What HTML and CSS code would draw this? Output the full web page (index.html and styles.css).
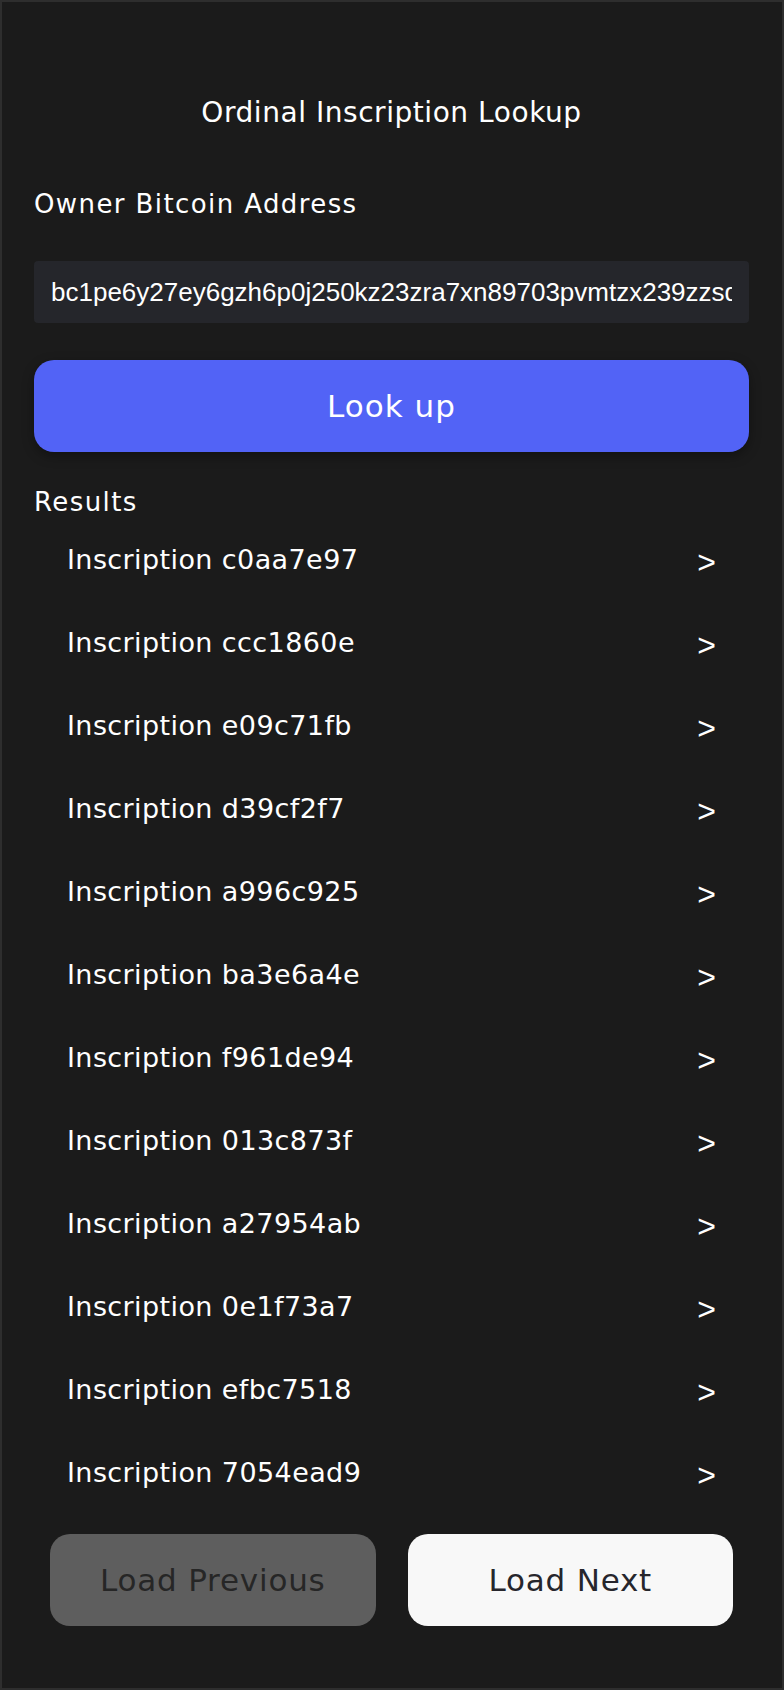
FILE: index.html
```html
<!DOCTYPE html>
<html lang="en">
<head>
<meta charset="utf-8">
<title>Ordinal Inscription Lookup</title>
<link rel="stylesheet" href="styles.css">
</head>
<body>
<div class="app">
  <h1 class="title">Ordinal Inscription Lookup</h1>
  <label class="label" for="addr">Owner Bitcoin Address</label>
  <input id="addr" class="address" type="text" value="bc1pe6y27ey6gzh6p0j250kz23zra7xn89703pvmtzx239zzsq8x5ts3vj0a8gtg3zv">
  <button class="lookup">Look up</button>
  <div class="label results-label">Results</div>
  <ul class="results">
    <li class="item"><span>Inscription c0aa7e97</span><span class="chev">&gt;</span></li>
    <li class="item"><span>Inscription ccc1860e</span><span class="chev">&gt;</span></li>
    <li class="item"><span>Inscription e09c71fb</span><span class="chev">&gt;</span></li>
    <li class="item"><span>Inscription d39cf2f7</span><span class="chev">&gt;</span></li>
    <li class="item"><span>Inscription a996c925</span><span class="chev">&gt;</span></li>
    <li class="item"><span>Inscription ba3e6a4e</span><span class="chev">&gt;</span></li>
    <li class="item"><span>Inscription f961de94</span><span class="chev">&gt;</span></li>
    <li class="item"><span>Inscription 013c873f</span><span class="chev">&gt;</span></li>
    <li class="item"><span>Inscription a27954ab</span><span class="chev">&gt;</span></li>
    <li class="item"><span>Inscription 0e1f73a7</span><span class="chev">&gt;</span></li>
    <li class="item"><span>Inscription efbc7518</span><span class="chev">&gt;</span></li>
    <li class="item"><span>Inscription 7054ead9</span><span class="chev">&gt;</span></li>
  </ul>
  <div class="pager">
    <button class="pbtn prev">Load Previous</button>
    <button class="pbtn next">Load Next</button>
  </div>
</div>
</body>
</html>
```

FILE: styles.css
```css
* { box-sizing: border-box; }
html, body { margin: 0; padding: 0; background: #1b1b1b; }
body { font-family: "DejaVu Sans", sans-serif; color: #ffffff; }

.app {
  width: 784px;
  height: 1690px;
  border: 2px solid #2e2e2e;
  background: #1b1b1b;
  padding: 93px 33px 0 32px;
  display: flex;
  flex-direction: column;
}

.title {
  margin: 0;
  font-weight: 400;
  font-size: 28px;
  line-height: 36px;
  letter-spacing: 0.55px;
  text-align: center;
}

.label {
  display: block;
  margin-top: 57px;
  font-size: 26px;
  line-height: 32px;
  letter-spacing: 1.4px;
}

.address {
  margin-top: 41px;
  height: 62px;
  width: 100%;
  border: none;
  border-radius: 4px;
  background: #25262b;
  color: #ffffff;
  font-family: "Liberation Sans", Arial, sans-serif;
  font-size: 26px;
  padding: 0 17px;
  outline: none;
}

.lookup {
  margin-top: 37px;
  height: 92px;
  width: 100%;
  border: none;
  border-radius: 20px;
  background: #5263f6;
  color: #ffffff;
  font-family: "DejaVu Sans", sans-serif;
  font-size: 31px;
  letter-spacing: 1px;
  box-shadow: 0 4px 12px rgba(0, 0, 0, 0.35);
}

.results-label { margin-top: 34px; }

.results {
  list-style: none;
  margin: 0;
  padding: 0;
}

.item {
  height: 83px;
  display: flex;
  align-items: center;
  justify-content: space-between;
  padding: 0 33px 0 33px;
  font-size: 27px;
  line-height: 83px;
  letter-spacing: 0.4px;
}

.chev {
  font-family: "Liberation Sans", sans-serif;
  font-size: 32px;
  letter-spacing: 0;
  position: relative;
  top: 3px;
}

.pager {
  margin-top: 20px;
  padding: 0 16px;
  display: flex;
  gap: 32px;
}

.pbtn {
  flex: 1;
  height: 92px;
  border: none;
  border-radius: 20px;
  font-family: "DejaVu Sans", sans-serif;
  font-size: 31px;
  letter-spacing: 0.8px;
}

.prev { background: #5e5e5e; color: #262626; }
.next { background: #f8f8f8; color: #26262c; }
```
